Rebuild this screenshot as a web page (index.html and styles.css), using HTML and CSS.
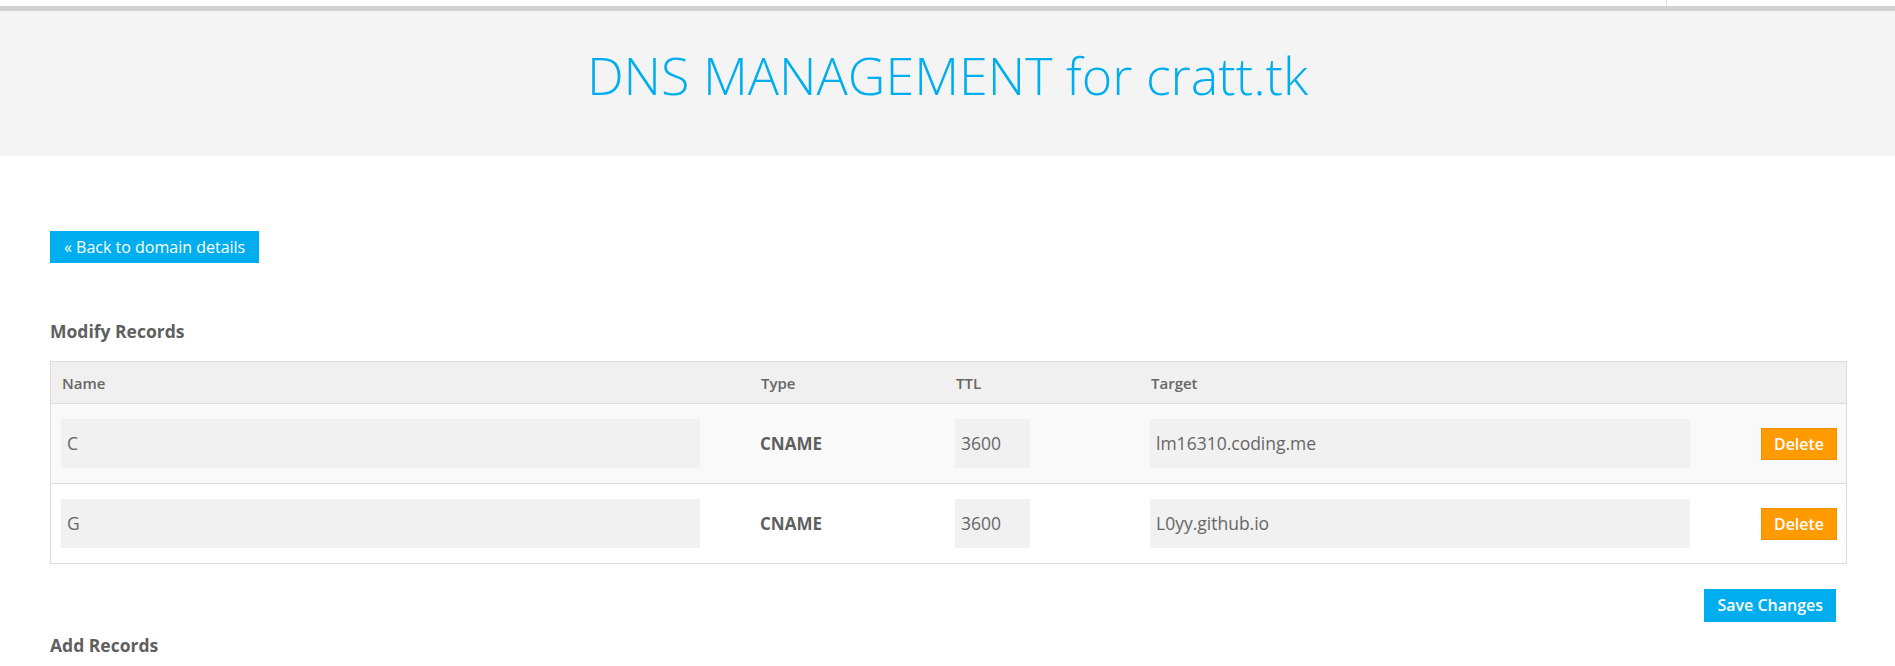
FILE: index.html
```html
<!DOCTYPE html>
<html>
<head>
<meta charset="utf-8">
<link rel="stylesheet" href="styles.css">
</head>
<body>
<div class="topstrip"><span class="topsep"></span></div>
<div class="topbar"></div>
<header class="hero">
  <h1 class="hero-title">DNS MANAGEMENT for cratt.tk</h1>
</header>
<main class="content">
  <a class="btn btn-blue btn-back" href="#">« Back to domain details</a>
  <h3 class="section-title modify">Modify Records</h3>
  <div class="records">
    <div class="row row-head">
      <div class="cell">Name</div>
      <div class="cell">Type</div>
      <div class="cell">TTL</div>
      <div class="cell">Target</div>
      <div class="cell"></div>
    </div>
    <div class="row row-odd">
      <div class="cell"><div class="field field-name">C</div></div>
      <div class="cell type">CNAME</div>
      <div class="cell"><div class="field field-ttl">3600</div></div>
      <div class="cell"><div class="field field-target">lm16310.coding.me</div></div>
      <div class="cell"><a class="btn btn-orange" href="#">Delete</a></div>
    </div>
    <div class="row row-even">
      <div class="cell"><div class="field field-name">G</div></div>
      <div class="cell type">CNAME</div>
      <div class="cell"><div class="field field-ttl">3600</div></div>
      <div class="cell"><div class="field field-target">L0yy.github.io</div></div>
      <div class="cell"><a class="btn btn-orange" href="#">Delete</a></div>
    </div>
  </div>
  <div class="actions">
    <a class="btn btn-blue btn-save" href="#">Save Changes</a>
  </div>
  <h3 class="section-title add">Add Records</h3>
</main>
</body>
</html>
```
FILE: styles.css
```css
* { box-sizing: border-box; }
html, body { margin: 0; padding: 0; background: #fff; }
body {
  font-family: "Open Sans", "Liberation Sans", sans-serif;
  color: #666;
  overflow: hidden;
}
.topstrip {
  height: 6px;
  position: relative;
}
.topsep {
  position: absolute;
  left: 1666px;
  top: 0;
  width: 1px;
  height: 6px;
  background: #e2e2e2;
}
.topbar {
  height: 5px;
  background: #d1d1d1;
}
.hero {
  background: #f4f4f4;
  height: 145px;
  display: flex;
  align-items: center;
  justify-content: center;
}
.hero-title {
  margin: 0;
  font-weight: 300;
  font-size: 52px;
  line-height: 1;
  color: #00aeef;
  padding-bottom: 17px;
}
.content {
  padding: 75px 48px 0 50px;
}
.btn {
  display: inline-block;
  text-decoration: none;
  color: #fff;
  font-family: "Open Sans", "Liberation Sans", sans-serif;
}
.btn-blue { background: #00aeef; }
.btn-back {
  height: 32px;
  line-height: 32px;
  padding: 0 14px;
  font-size: 16px;
}
.section-title {
  margin: 0;
  font-size: 17.5px;
  font-weight: 700;
  color: #5f5f5f;
  line-height: 24px;
}
.modify { margin-top: 56px; margin-bottom: 18px; }
.records {
  border: 1px solid #dcdcdc;
}
.row {
  display: grid;
  grid-template-columns: 699px 195px 195px 611px 1fr;
  align-items: center;
}
.row + .row { border-top: 1px solid #dcdcdc; }
.row-head {
  background: #f0f0f0;
  height: 41px;
  font-size: 15px;
  font-weight: 600;
  color: #666;
}
.row-head .cell { padding-left: 11px; }
.row-odd { background: #f9f9f9; }
.row-even { background: #fff; }
.row-odd, .row-even { height: 80px; }
.cell { padding-left: 10px; }
.field {
  background: #f1f1f1;
  height: 49px;
  line-height: 49px;
  padding-left: 6px;
  font-size: 17.5px;
  color: #666;
}
.field-name { width: 639px; }
.field-ttl { width: 75px; }
.field-target { width: 540px; }
.type {
  font-weight: 700;
  font-size: 17px;
  color: #5f5f5f;
}
.btn-orange {
  background: #ff9a00;
  height: 32px;
  line-height: 31px;
  width: 76px;
  text-align: center;
  font-size: 16px;
  font-weight: 600;
  border: 1px solid #f08f00;
}
.actions {
  display: flex;
  justify-content: flex-end;
  padding-right: 11px;
  margin-top: 25px;
}
.btn-save {
  height: 33px;
  line-height: 33px;
  padding: 0 13px;
  font-size: 16px;
  font-weight: 600;
}
.add { margin-top: 11px; }
```
